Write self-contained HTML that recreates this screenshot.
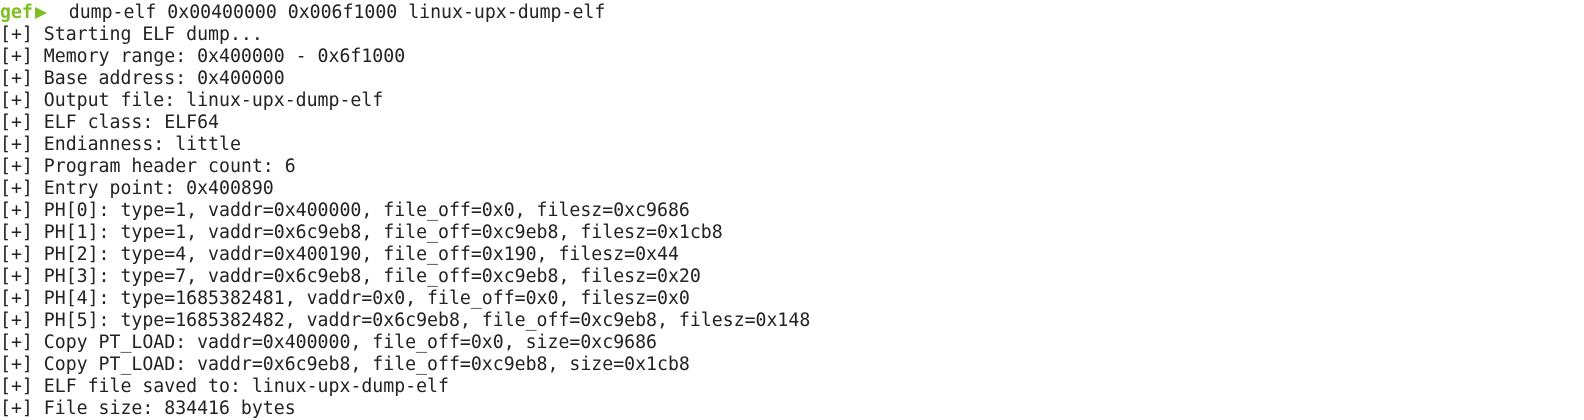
<!DOCTYPE html>
<html><head><style>
html,body{margin:0;padding:0;background:#fff;width:1584px;height:420px;overflow:hidden}
pre{margin:0;padding:2px 0 0 0;font-family:"DejaVu Sans Mono","Liberation Mono",monospace;font-size:18.2px;line-height:22px;color:#222;letter-spacing:0}
.g{color:#7dc021;font-weight:bold}
.a{display:inline-block;width:0;height:0;border-top:6px solid transparent;border-bottom:6px solid transparent;border-left:12px solid #7dc021;vertical-align:-1px;margin-left:2px;margin-right:0}
</style></head><body><pre><span class="g">gef</span><span class="a"></span>  dump-elf 0x00400000 0x006f1000 linux-upx-dump-elf
[+] Starting ELF dump...
[+] Memory range: 0x400000 - 0x6f1000
[+] Base address: 0x400000
[+] Output file: linux-upx-dump-elf
[+] ELF class: ELF64
[+] Endianness: little
[+] Program header count: 6
[+] Entry point: 0x400890
[+] PH[0]: type=1, vaddr=0x400000, file_off=0x0, filesz=0xc9686
[+] PH[1]: type=1, vaddr=0x6c9eb8, file_off=0xc9eb8, filesz=0x1cb8
[+] PH[2]: type=4, vaddr=0x400190, file_off=0x190, filesz=0x44
[+] PH[3]: type=7, vaddr=0x6c9eb8, file_off=0xc9eb8, filesz=0x20
[+] PH[4]: type=1685382481, vaddr=0x0, file_off=0x0, filesz=0x0
[+] PH[5]: type=1685382482, vaddr=0x6c9eb8, file_off=0xc9eb8, filesz=0x148
[+] Copy PT_LOAD: vaddr=0x400000, file_off=0x0, size=0xc9686
[+] Copy PT_LOAD: vaddr=0x6c9eb8, file_off=0xc9eb8, size=0x1cb8
[+] ELF file saved to: linux-upx-dump-elf
[+] File size: 834416 bytes</pre></body></html>
